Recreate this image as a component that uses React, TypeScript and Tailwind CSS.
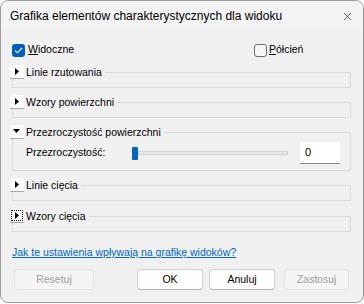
import { X } from "lucide-react";

const font = { fontFamily: '"Segoe UI", "Liberation Sans", Arial, sans-serif' };

function Expander({ open = false, focused = false }: { open?: boolean; focused?: boolean }) {
  return (
    <div className="w-[14px] h-[14px] bg-[#fbfbfb] border-b border-[#a8a8a8] flex items-center justify-center shrink-0 relative">
      {focused && <div className="absolute inset-[1px] border border-dotted border-black" />}
      {open ? (
        <svg width="8" height="5" viewBox="0 0 8 5"><path d="M0 0H7L3.5 4Z" fill="#000" /></svg>
      ) : (
        <svg width="5" height="8" viewBox="0 0 5 8"><path d="M0 0V7L4 3.5Z" fill="#000" /></svg>
      )}
    </div>
  );
}

function Section({ title, open, focused, className = "", children }: { title: string; open?: boolean; focused?: boolean; className?: string; children?: React.ReactNode }) {
  return (
    <div className={`border border-[#dadada] ${open ? "h-[39px]" : "h-[16px]"} ${className}`}>
      <div className="flex items-center h-[14px] -mt-[8px] -ml-[3px] w-fit bg-[#f0f0f0]">
        <Expander open={open} focused={focused} />
        <span className="pl-[2px] pr-[3px] text-[10.5px] leading-[14px] text-black">{title}</span>
      </div>
      {children}
    </div>
  );
}

export default function App() {
  return (
    <div className="w-[364px] h-[304px] bg-white" style={font}>
      <div className="w-[364px] h-[303px] rounded-[8px] border border-[#9c9c9c] bg-[#f0f0f0] overflow-hidden flex flex-col">
        {/* title bar */}
        <div className="h-[30px] bg-[#f3f3f3] flex items-center justify-between pl-[9px] pr-[9px] shrink-0">
          <span className="text-[12px] text-black">Grafika elementów charakterystycznych dla widoku</span>
          <X size={13} strokeWidth={1.2} className="text-[#1a1a1a]" />
        </div>

        <div className="pl-[11px] pr-[12px] flex flex-col text-[10.5px]">
          {/* checkboxes */}
          <div className="flex items-center h-[14px] mt-[12px]">
            <div className="w-[242px] flex items-center">
              <div className="w-[13px] h-[13px] rounded-[3px] bg-[#005fb8] flex items-center justify-center">
                <svg width="9" height="7" viewBox="0 0 9 7"><path d="M1 3.6L3.3 5.8L8 1" stroke="#fff" strokeWidth="1.1" fill="none" /></svg>
              </div>
              <span className="ml-[3px] text-black"><span className="underline">W</span>idoczne</span>
            </div>
            <div className="flex items-center">
              <div className="w-[13px] h-[13px] rounded-[3px] bg-[#f7f7f7] border border-[#6e6e6e]" />
              <span className="ml-[2px] text-black"><span className="underline">P</span>ółcień</span>
            </div>
          </div>

          <Section title="Linie rzutowania" className="mt-[15px]" />
          <Section title="Wzory powierzchni" className="mt-[14px]" />
          <Section title="Przezroczystość powierzchni" open className="mt-[14px]">
            <div className="flex items-center h-[22px] mt-[3px] pl-[13px] pr-[10px]">
              <span className="w-[106px] text-black">Przezroczystość:</span>
              <div className="w-[6px] h-[13px] bg-[#0067c0] rounded-[1px] shrink-0" />
              <div className="flex-1 h-[4px] bg-[#e8e8e8] border border-[#d2d2d2]" />
              <div className="ml-[12px] w-[40px] h-[22px] bg-white border-b border-[#868686] flex items-center pl-[5px] text-[11px] text-black">0</div>
            </div>
          </Section>
          <Section title="Linie cięcia" className="mt-[14px]" />
          <Section title="Wzory cięcia" focused className="mt-[15px]" />

          <a className="mt-[13px] w-fit leading-[15px] text-[#0066cc] underline">
            Jak te ustawienia wpływają na grafikę widoków?
          </a>

          <div className="flex items-center mt-[9px]">
            <button className="ml-[2px] w-[80px] h-[21px] rounded-[4px] bg-[#f5f5f5] border border-[#e3e3e3] text-[10.5px] text-[#9d9d9d]">Resetuj</button>
            <button className="ml-[43px] w-[66px] h-[21px] rounded-[4px] bg-[#fdfdfd] border border-[#d3d3d3] border-b-[#b3b3b3] text-[10.5px] text-black">OK</button>
            <button className="ml-[6px] w-[66px] h-[21px] rounded-[4px] bg-[#fdfdfd] border border-[#d3d3d3] border-b-[#b3b3b3] text-[10.5px] text-black">Anuluj</button>
            <button className="ml-[9px] w-[65px] h-[21px] rounded-[4px] bg-[#f5f5f5] border border-[#e3e3e3] text-[10.5px] text-[#9d9d9d]">Zastosuj</button>
          </div>
        </div>
      </div>
    </div>
  );
}
